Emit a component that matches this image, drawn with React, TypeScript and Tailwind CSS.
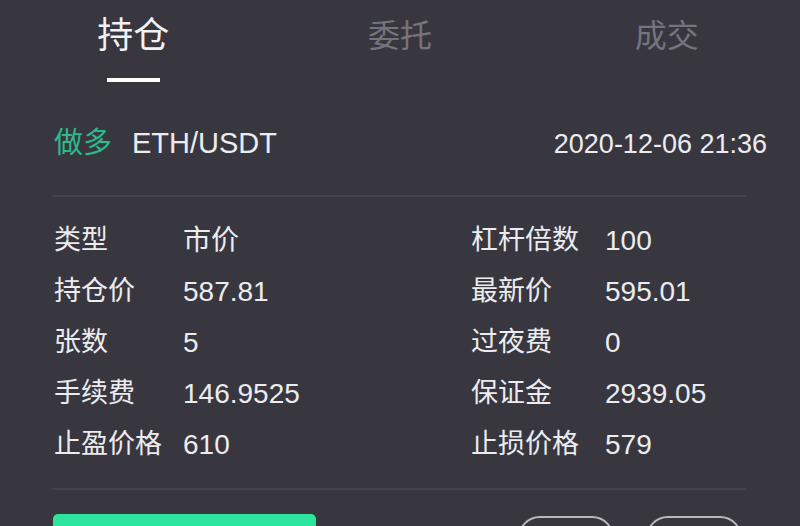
const rows: [string, string, string, string][] = [
  ['类型', '市价', '杠杆倍数', '100'],
  ['持仓价', '587.81', '最新价', '595.01'],
  ['张数', '5', '过夜费', '0'],
  ['手续费', '146.9525', '保证金', '2939.05'],
  ['止盈价格', '610', '止损价格', '579'],
];

export default function App() {
  return (
    <div
      className="w-[800px] h-[526px] overflow-hidden bg-[#383740] text-[#ececef]"
      style={{ fontFamily: '"Liberation Sans", "Noto Sans CJK SC", sans-serif' }}
    >
      {/* tabs */}
      <div className="grid grid-cols-3 pt-[14px]">
        <div className="flex flex-col items-center">
          <span className="text-[36px] leading-[44px] text-[#f2f2f4]">持仓</span>
          <span className="mt-[20px] w-[53px] h-[4px] bg-white" />
        </div>
        <div className="flex flex-col items-center">
          <span className="text-[32px] leading-[44px] text-[#75747c]">委托</span>
        </div>
        <div className="flex flex-col items-center">
          <span className="text-[32px] leading-[44px] text-[#75747c]">成交</span>
        </div>
      </div>

      {/* header */}
      <div className="flex items-center justify-between pl-[54px] pr-[33px] mt-[42px] h-[40px]">
        <div className="flex items-center gap-[20px]">
          <span className="text-[29px] text-[#2fb88a]">做多</span>
          <span className="text-[29px]">ETH/USDT</span>
        </div>
        <span className="text-[27px]">2020-12-06 21:36</span>
      </div>
      <div className="ml-[52px] mr-[54px] mt-[31px] h-[2px] bg-[#44434c]" />

      {/* details */}
      <div className="pl-[54px] pt-[18px] pb-[18px]">
        {rows.map((r) => (
          <div key={r[0]} className="flex items-center h-[51px]">
            <span className="w-[129px] text-[27px]">{r[0]}</span>
            <span className="w-[288px] text-[28px]">{r[1]}</span>
            <span className="w-[134px] text-[27px]">{r[2]}</span>
            <span className="text-[28px]">{r[3]}</span>
          </div>
        ))}
      </div>
      <div className="ml-[52px] mr-[54px] h-[2px] bg-[#44434c]" />

      {/* actions */}
      <div className="flex items-start justify-between pl-[53px] pr-[58px] mt-[24px]">
        <div className="w-[263px] h-[44px] rounded-[5px] bg-[#2ce49c]" />
        <div className="flex gap-[32px] mt-[2px]">
          <div className="w-[96px] h-[44px] rounded-[24px] border-2 border-[#b9b8bc]" />
          <div className="w-[96px] h-[44px] rounded-[24px] border-2 border-[#b9b8bc]" />
        </div>
      </div>
    </div>
  );
}
